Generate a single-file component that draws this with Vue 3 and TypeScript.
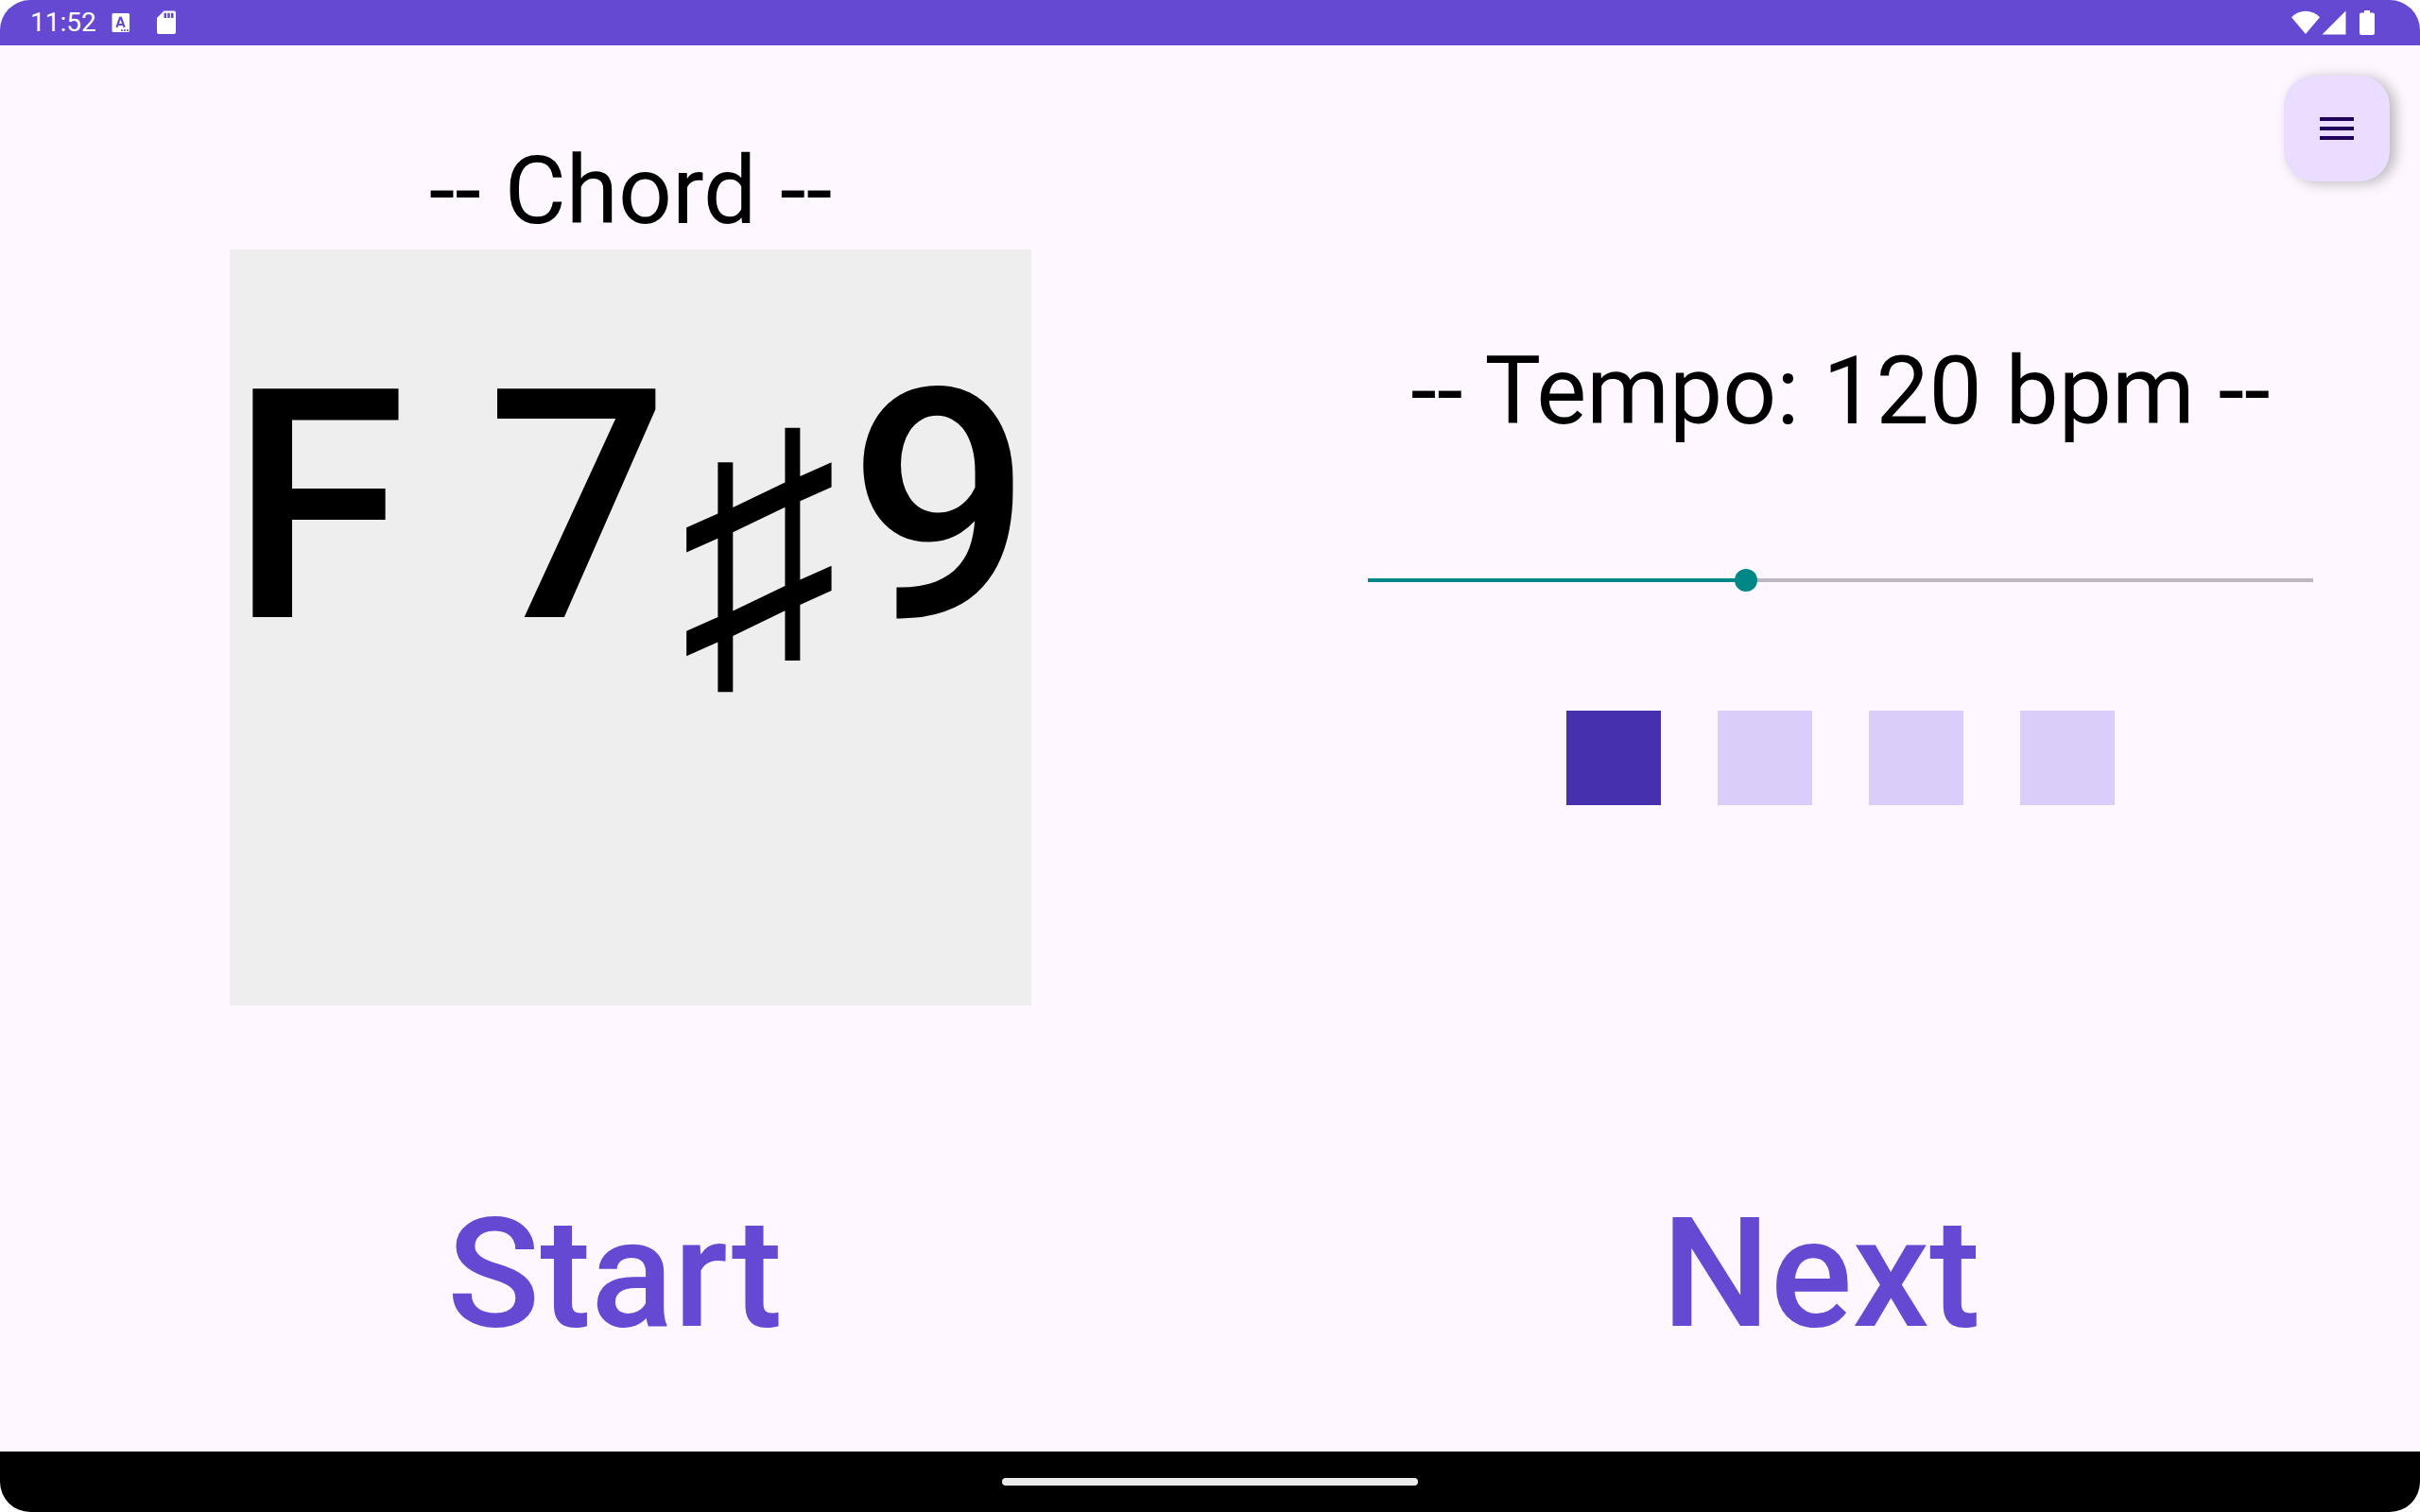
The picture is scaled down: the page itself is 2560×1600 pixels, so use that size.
<script setup lang="ts">
import { computed, ref } from 'vue'

const MIN_BPM = 40
const MAX_BPM = 240

const tempo = ref(120)
const beat = ref(0)
const beats = [0, 1, 2, 3]
const running = ref(false)

const fill = computed(() => `${((tempo.value - MIN_BPM) / (MAX_BPM - MIN_BPM)) * 100}%`)

function toggle(): void {
  running.value = !running.value
}

function next(): void {
  beat.value = (beat.value + 1) % beats.length
}
</script>

<template>
  <div class="device">
    <header class="status-bar">
      <div class="status-left">
        <time class="clock">11:52</time>
        <svg class="icon-ime" viewBox="0 0 20 22" aria-hidden="true">
          <rect x="0.5" y="1" width="18.5" height="20" rx="1.5" fill="#fff" />
          <path d="M5.400 15.800 9 5.800h1L13.600 15.800M6.800 13h5.400" fill="none" stroke="#6549d3" stroke-width="2.2" />
          <path d="M10 18.200h1.800v1.800H10zM13 18.200h1.800v1.800H13zM16 18.200h1.800v1.800H16z" fill="#6549d3" />
        </svg>
        <svg class="icon-sd" viewBox="0 0 20 26" aria-hidden="true">
          <path d="M7.500 0.500H18a2 2 0 0 1 2 2V23a2 2 0 0 1-2 2H2a2 2 0 0 1-2-2V8z" fill="#fff" />
          <path d="M7.500 2.700h2.600v5.200H7.500zM11.200 2.700h2.600v5.200h-2.600zM14.900 2.700h2.600v5.200h-2.600z" fill="#6549d3" />
        </svg>
      </div>
      <div class="status-right">
        <svg class="icon-wifi" viewBox="0 0 30 26" aria-hidden="true">
          <path d="M15 25 0 7.200C4 3 9 0.800 15 0.800S26 3 30 7.200z" fill="#fff" />
        </svg>
        <svg class="icon-signal" viewBox="0 0 26 26" aria-hidden="true">
          <path d="M0.500 25.500H25.500V0.500z" fill="#fff" />
        </svg>
        <svg class="icon-battery" viewBox="0 0 16 26" aria-hidden="true">
          <path d="M5 0h6v2.500h3a2 2 0 0 1 2 2V24a2 2 0 0 1-2 2H2a2 2 0 0 1-2-2V4.500a2 2 0 0 1 2-2h3z" fill="#fff" />
        </svg>
      </div>
    </header>

    <main class="screen">
      <section class="panels">
        <div class="chord-panel">
          <h2 class="title">-- Chord --</h2>
          <p class="chord">F 7<span class="sharp">♯</span>9</p>
        </div>

        <div class="tempo-panel">
          <label class="title" for="tempo">-- Tempo: {{ tempo }} bpm --</label>
          <input
            id="tempo"
            v-model.number="tempo"
            class="slider"
            type="range"
            :min="MIN_BPM"
            :max="MAX_BPM"
            :style="{ '--fill': fill }"
          />
          <div class="beats">
            <span v-for="b in beats" :key="b" class="beat" :class="{ active: b === beat }"></span>
          </div>
        </div>
      </section>

      <section class="actions">
        <button class="action" type="button" @click="toggle">{{ running ? 'Stop' : 'Start' }}</button>
        <button class="action" type="button" @click="next">Next</button>
      </section>

      <button class="menu" type="button" aria-label="Menu">
        <svg class="icon-menu" viewBox="0 0 48 48" aria-hidden="true">
          <path d="M6 12h36v4H6zM6 22h36v4H6zM6 32h36v4H6z" fill="#21005d" />
        </svg>
      </button>
    </main>

    <footer class="nav-bar">
      <span class="handle"></span>
    </footer>
  </div>
</template>

<style>
body {
  background: #fff;
}
</style>

<style scoped>
.device {
  display: flex;
  flex-direction: column;
  min-height: 100vh;
  border-radius: 32px;
  overflow: hidden;
  background: #fef7ff;
  color: #000;
  font-family: Roboto, sans-serif;
}

.status-bar {
  display: flex;
  align-items: center;
  justify-content: space-between;
  height: 48px;
  padding: 0 48px 0 32px;
  background: #6549d3;
  color: #fff;
}

.status-left,
.status-right {
  display: flex;
  align-items: center;
}

.clock {
  margin-right: 16px;
  font-size: 28px;
  line-height: 32px;
}

.icon-ime {
  width: 20px;
  height: 22px;
  margin-right: 28px;
}

.icon-sd {
  width: 20px;
  height: 26px;
}

.icon-wifi {
  width: 30px;
  height: 26px;
  margin-right: 2px;
}

.icon-signal {
  width: 26px;
  height: 26px;
  margin-right: 14px;
}

.icon-battery {
  width: 16px;
  height: 26px;
}

.screen {
  position: relative;
  display: flex;
  flex: 1;
  flex-direction: column;
}

.panels {
  display: grid;
  flex: 1;
  grid-template-columns: 667fr 613fr;
  align-items: center;
}

.chord-panel,
.tempo-panel {
  display: flex;
  flex-direction: column;
  align-items: center;
}

.tempo-panel {
  gap: 126px;
}

.title {
  margin: 0 0 4px;
  font-size: 100px;
  font-weight: 400;
  line-height: 116px;
  white-space: nowrap;
}

.chord {
  box-sizing: border-box;
  height: 800px;
  margin: 0;
  background: #eee;
  font-size: 340px;
  font-weight: 500;
  line-height: 546px;
  white-space: nowrap;
}

.sharp {
  padding: 0 10px;
  line-height: 340px;
  vertical-align: -46px;
}

.slider {
  width: 1024px;
  max-width: 90%;
  height: 24px;
  margin: 0;
  appearance: none;
  background: linear-gradient(to right, #018786 var(--fill), #bdb6bf var(--fill)) center / calc(100% - 24px) 4px no-repeat;
}

.slider::-webkit-slider-thumb {
  width: 24px;
  height: 24px;
  border-radius: 50%;
  appearance: none;
  background: #018786;
}

.beats {
  display: flex;
  gap: 60px;
}

.beat {
  width: 100px;
  height: 100px;
  background: #dacdf9;
}

.beat.active {
  background: #4630ae;
}

.actions {
  display: flex;
  align-items: center;
  justify-content: space-around;
  height: 376px;
  padding-left: 8px;
}

.action {
  padding: 0 16px;
  border: 0;
  background: none;
  color: #6549d3;
  font-family: inherit;
  font-size: 162px;
  font-weight: 500;
  line-height: 188px;
}

.menu {
  position: absolute;
  top: 32px;
  right: 32px;
  display: flex;
  align-items: center;
  justify-content: center;
  width: 112px;
  height: 112px;
  padding: 0;
  border: 0;
  border-radius: 32px;
  background: #eaddff;
  box-shadow: 6px 2px 14px rgba(0, 0, 0, 0.26);
}

.icon-menu {
  width: 48px;
  height: 48px;
}

.nav-bar {
  display: flex;
  align-items: center;
  justify-content: center;
  height: 64px;
  background: #000;
}

.handle {
  width: 440px;
  height: 8px;
  border-radius: 4px;
  background: #ebebeb;
}
</style>
